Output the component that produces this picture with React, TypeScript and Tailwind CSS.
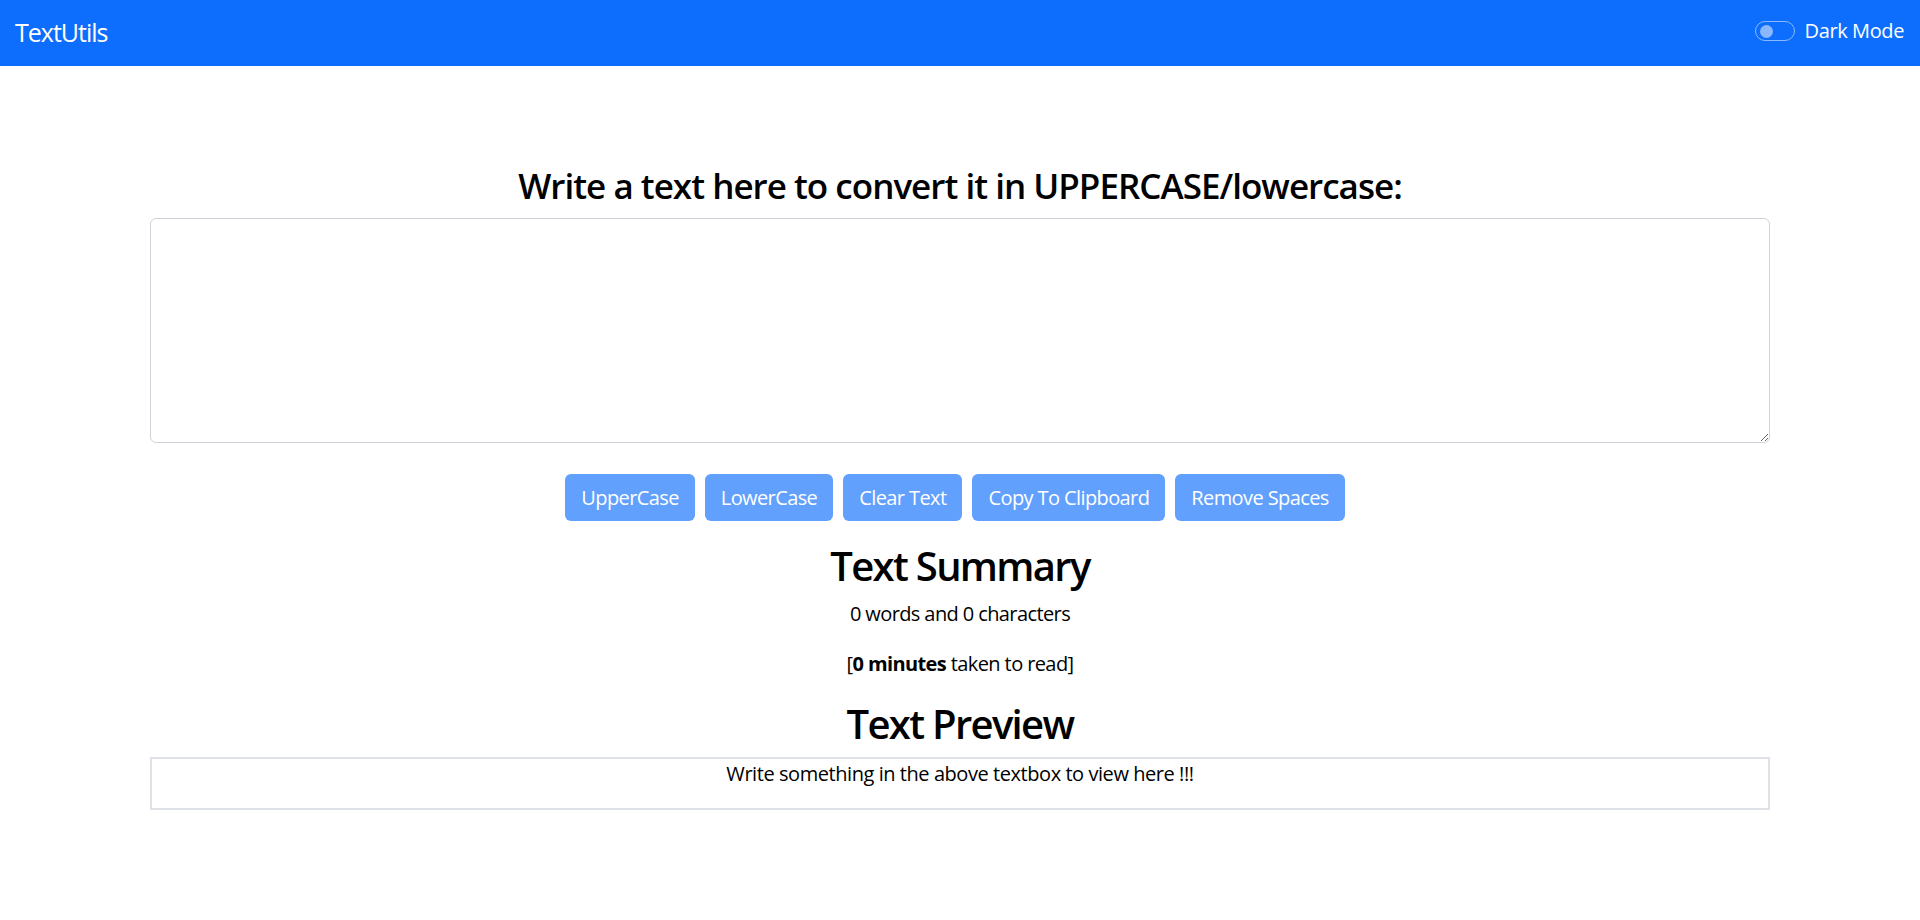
import React from "react";

const buttons = [
  "UpperCase",
  "LowerCase",
  "Clear Text",
  "Copy To Clipboard",
  "Remove Spaces",
];

const Navbar: React.FC = () => {
  return (
    <nav className="flex h-[66px] items-center justify-between bg-[#0d6efd] pl-[15px] pr-[16px]">
      <span className="text-[25px] leading-[1.5] text-white tracking-[-0.04em]">TextUtils</span>
      <div className="mb-[4px] flex items-center gap-[10px]">
        <div className="flex h-[20px] w-[40px] items-center rounded-full border border-[#8ab8fe] pl-[4px]">
          <div className="h-[13px] w-[13px] rounded-full bg-[#8bb7fd]" />
        </div>
        <span className="text-[20px] leading-[1.5] text-white tracking-[-0.02em]">Dark Mode</span>
      </div>
    </nav>
  );
};

export default function App() {
  return (
    <div className="min-h-screen bg-white font-['Open_Sans',sans-serif] text-black">
      <Navbar />
      <main className="mx-auto w-[1620px] pt-[99px]">
        <h3 className="mb-[11px] text-center text-[35px] font-semibold leading-[1.2] tracking-[-0.028em]">
          Write a text here to convert it in UPPERCASE/lowercase:
        </h3>
        <textarea
          className="block h-[225px] w-full rounded-[6px] border border-[#ced4da] px-[15px] py-[8px] text-[20px] outline-none"
          rows={8}
        />
        <div className="mt-[31px] flex justify-center gap-[10px] pr-[10px]">
          {buttons.map((b) => (
            <button
              key={b}
              className="h-[47px] rounded-[6px] bg-[#62a0fe] px-[16px] text-[20px] text-white tracking-[-0.03em]"
            >
              {b}
            </button>
          ))}
        </div>
        <h2 className="mt-[21px] text-center text-[40px] font-semibold leading-[1.2] tracking-[-0.042em]">
          Text Summary
        </h2>
        <p className="mt-[9px] text-center text-[20px] leading-[1.5] tracking-[-0.03em]">
          0 words and 0 characters
        </p>
        <p className="mt-[20px] text-center text-[20px] leading-[1.5] tracking-[-0.03em]">
          [<b className="font-bold">0 minutes</b> taken to read]
        </p>
        <h2 className="mt-[21px] text-center text-[40px] font-semibold leading-[1.2] tracking-[-0.042em]">
          Text Preview
        </h2>
        <div className="mt-[9px] border-2 border-[#dee2e6] text-center">
          <p className="mb-[19px] text-[20px] leading-[1.5] tracking-[-0.022em]">
            Write something in the above textbox to view here !!!
          </p>
        </div>
      </main>
    </div>
  );
}
